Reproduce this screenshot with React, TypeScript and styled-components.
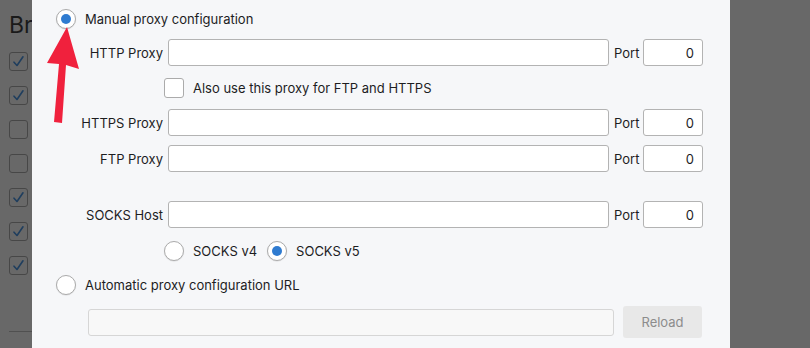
import styled, { createGlobalStyle } from "styled-components";

const GlobalStyle = createGlobalStyle`
    html, body {
        margin: 0;
        padding: 0;
        background: #676767;
    }
    body {
        font-family: Inter, "Noto Sans", "Liberation Sans", sans-serif;
        font-size: 13px;
        color: #1d1d1f;
    }
`;

const Page = styled.div`
    display: flex;
    width: 810px;
    height: 348px;
    overflow: hidden;
    position: relative;
`;

const Backdrop = styled.div<{ $width: number }>`
    flex: 0 0 ${(props) => props.$width}px;
    background: #686868;
    overflow: hidden;
`;

const BackdropList = styled.div`
    padding: 14px 0 0 9px;
    display: flex;
    flex-direction: column;
`;

const BackdropTitle = styled.div`
    font-size: 23px;
    line-height: 22px;
    color: #1a1a1a;
    white-space: nowrap;
    margin-bottom: 16px;
`;

const DimCheck = styled.span`
    display: flex;
    align-items: center;
    justify-content: center;
    width: 17px;
    height: 17px;
    border: 1px solid #474747;
    border-radius: 3px;
    margin-bottom: 15px;
    svg {
        width: 13px;
        height: 13px;
    }
`;

const DimRule = styled.div`
    height: 1px;
    background: #505050;
    margin-top: 41px;
`;

const Dialog = styled.div`
    flex: 0 0 698px;
    background: #f6f7f9;
    padding: 9px 0 0 24px;
    box-sizing: border-box;
    display: flex;
    flex-direction: column;
`;

const RadioRow = styled.label<{ $top?: number }>`
    display: flex;
    align-items: center;
    gap: 9px;
    height: 20px;
    margin-top: ${(props) => props.$top ?? 0}px;
    white-space: nowrap;
`;

const Radio = styled.span<{ $checked?: boolean }>`
    flex: 0 0 auto;
    width: 18px;
    height: 18px;
    border-radius: 50%;
    border: 1px solid #ababab;
    background: #fff;
    box-shadow: 0 0.5px 1px rgba(0, 0, 0, 0.12);
    display: flex;
    align-items: center;
    justify-content: center;
    &::after {
        content: "";
        display: ${(props) => (props.$checked ? "block" : "none")};
        width: 10px;
        height: 10px;
        border-radius: 50%;
        background: #2f7bd0;
    }
`;

const RadioGroup = styled.div`
    display: flex;
    align-items: center;
    gap: 10px;
    margin: 13px 0 0 108px;
`;

const FieldRow = styled.div<{ $top: number }>`
    display: grid;
    grid-template-columns: 107px 441px 25px 59px;
    column-gap: 5px;
    align-items: center;
    margin-top: ${(props) => props.$top}px;
`;

const FieldLabel = styled.span`
    text-align: right;
    white-space: nowrap;
`;

const PortLabel = styled.span`
    white-space: nowrap;
`;

const TextBox = styled.div<{ $align?: string }>`
    height: 27px;
    box-sizing: border-box;
    background: #fff;
    border: 1px solid #b3b3b3;
    border-radius: 3px;
    display: flex;
    align-items: center;
    justify-content: ${(props) => (props.$align === "right" ? "flex-end" : "flex-start")};
    padding: 0 8px;
`;

const PortBox = styled(TextBox)`
    margin-left: -1px;
`;

const CheckRow = styled.label`
    display: flex;
    align-items: center;
    gap: 9px;
    margin: 12px 0 0 108px;
    height: 20px;
    white-space: nowrap;
`;

const CheckBox = styled.span`
    width: 18px;
    height: 18px;
    border: 1px solid #ababab;
    border-radius: 3px;
    background: #fff;
`;

const UrlRow = styled.div`
    display: flex;
    align-items: center;
    gap: 9px;
    margin: 11px 0 0 32px;
`;

const UrlBox = styled.div`
    width: 526px;
    height: 27px;
    box-sizing: border-box;
    border: 1px solid #d6d6d6;
    border-radius: 3px;
    background: #f8f8f8;
`;

const ReloadButton = styled.div`
    width: 79px;
    height: 32px;
    border-radius: 3px;
    background: #e8e8e8;
    color: #8c8c8c;
    display: flex;
    align-items: center;
    justify-content: center;
`;

const Arrow = styled.svg`
    position: absolute;
    left: 40px;
    top: 20px;
    width: 50px;
    height: 110px;
`;

function CheckMark() {
    return (
        <svg viewBox="0 0 13 13">
            <path d="M2 7.2 L5 10.5 L11 1.8" fill="none" stroke="#1f3e5e" strokeWidth="1.6" strokeLinecap="round" strokeLinejoin="round" />
        </svg>
    );
}

const leftChecks = [true, true, false, false, true, true, true];

function App() {
    return (
        <>
            <GlobalStyle />
            <Page>
                <Backdrop $width={32}>
                    <BackdropList>
                        <BackdropTitle>Browser</BackdropTitle>
                        {leftChecks.map((checked, i) => (
                            <DimCheck key={i}>{checked && <CheckMark />}</DimCheck>
                        ))}
                        <DimRule />
                    </BackdropList>
                </Backdrop>
                <Dialog>
                    <RadioRow>
                        <Radio $checked />
                        <span>Manual proxy configuration</span>
                    </RadioRow>
                    <FieldRow $top={10}>
                        <FieldLabel>HTTP Proxy</FieldLabel>
                        <TextBox />
                        <PortLabel>Port</PortLabel>
                        <PortBox $align="right">0</PortBox>
                    </FieldRow>
                    <CheckRow>
                        <CheckBox />
                        <span>Also use this proxy for FTP and HTTPS</span>
                    </CheckRow>
                    <FieldRow $top={11}>
                        <FieldLabel>HTTPS Proxy</FieldLabel>
                        <TextBox />
                        <PortLabel>Port</PortLabel>
                        <PortBox $align="right">0</PortBox>
                    </FieldRow>
                    <FieldRow $top={9}>
                        <FieldLabel>FTP Proxy</FieldLabel>
                        <TextBox />
                        <PortLabel>Port</PortLabel>
                        <PortBox $align="right">0</PortBox>
                    </FieldRow>
                    <FieldRow $top={29}>
                        <FieldLabel>SOCKS Host</FieldLabel>
                        <TextBox />
                        <PortLabel>Port</PortLabel>
                        <PortBox $align="right">0</PortBox>
                    </FieldRow>
                    <RadioGroup>
                        <RadioRow>
                            <Radio />
                            <span>SOCKS v4</span>
                        </RadioRow>
                        <RadioRow>
                            <Radio $checked />
                            <span>SOCKS v5</span>
                        </RadioRow>
                    </RadioGroup>
                    <RadioRow $top={14}>
                        <Radio />
                        <span>Automatic proxy configuration URL</span>
                    </RadioRow>
                    <UrlRow>
                        <UrlBox />
                        <ReloadButton>Reload</ReloadButton>
                    </UrlRow>
                </Dialog>
                <Backdrop $width={80} />
                <Arrow viewBox="40 20 50 110">
                    <polygon points="67,27 79,69 66,65 62,123 54,122 59,64 47,63" fill="#f0213d" />
                </Arrow>
            </Page>
        </>
    );
}

export default App;
